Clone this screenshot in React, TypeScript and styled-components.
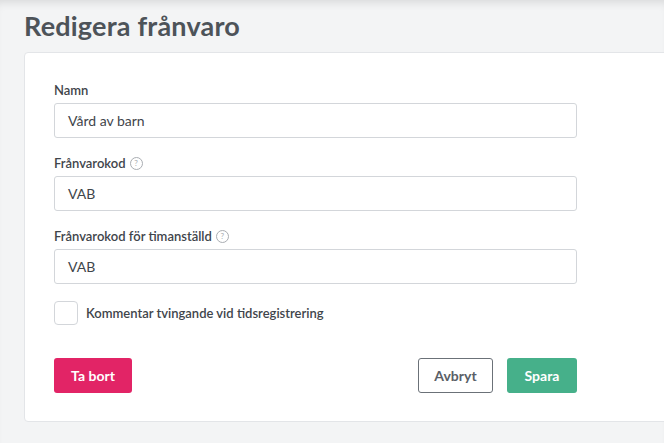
import React from "react";
import styled, { createGlobalStyle } from "styled-components";

const Global = createGlobalStyle`
  html, body { margin: 0; padding: 0; overflow: hidden; }
  body { background: #f3f4f5; font-family: Lato, "Open Sans", sans-serif; color: #4b5258; }
`;

const Page = styled.div`
  height: 443px;
  box-shadow: inset 0 8px 10px -6px rgba(0,0,0,0.12);
  padding: 8px 0 0 24px;
  box-sizing: border-box;
`;

const Title = styled.h1`
  margin: 0 0 9px;
  font-size: 27px;
  font-weight: 700;
  line-height: 35px;
  color: #4d5359;
  letter-spacing: 0.2px;
`;

const Card = styled.div`
  background: #fff;
  border: 1px solid #e3e5e8;
  border-radius: 4px;
  margin-right: -10px;
  padding: 28px 0 28px 29px;
  height: 370px;
  box-sizing: border-box;
`;

const Form = styled.div`
  width: 523px;
  display: flex;
  flex-direction: column;
`;

const Field = styled.div`
  display: flex;
  flex-direction: column;
  margin-bottom: 16px;
`;

const Label = styled.label`
  font-size: 13px;
  font-weight: 600;
  line-height: 18px;
  margin-bottom: 4px;
  color: #3f454b;
  display: flex;
  align-items: center;
  gap: 4px;
`;

const Help = styled.span`
  display: inline-flex;
  align-items: center;
  justify-content: center;
  width: 11px;
  height: 11px;
  border: 1px solid #a9adb2;
  border-radius: 50%;
  font-size: 8px;
  color: #a9adb2;
  font-weight: 400;
`;

const Input = styled.div`
  height: 35px;
  box-sizing: border-box;
  border: 1px solid #d3d6da;
  border-radius: 3px;
  padding: 0 13px;
  display: flex;
  align-items: center;
  font-size: 14px;
  color: #3f454b;
`;

const CheckRow = styled.div`
  display: flex;
  align-items: center;
  gap: 8px;
  margin-top: 1px;
  font-size: 13px;
  font-weight: 600;
  color: #3f454b;
`;

const Box = styled.span`
  width: 24px;
  height: 24px;
  box-sizing: border-box;
  border: 1px solid #d3d6da;
  border-radius: 4px;
`;

const Actions = styled.div`
  margin-top: 33px;
  display: flex;
  align-items: center;
`;

const Right = styled.div`
  margin-left: auto;
  display: flex;
  gap: 14px;
`;

const Button = styled.button<{ $kind: "danger" | "ghost" | "primary"; $w: number }>`
  height: 35px;
  width: ${p => p.$w}px;
  border-radius: 3px;
  font-family: inherit;
  font-size: 14px;
  font-weight: 700;
  cursor: pointer;
  border: 1px solid ${p => p.$kind === "ghost" ? "#6b7178" : "transparent"};
  background: ${p => p.$kind === "danger" ? "#e22466" : p.$kind === "primary" ? "#46b08a" : "#fff"};
  color: ${p => p.$kind === "ghost" ? "#5a6067" : "#fff"};
`;

export default function App() {
  return (
    <>
      <Global />
      <Page>
        <Title>Redigera frånvaro</Title>
        <Card>
          <Form>
            <Field>
              <Label>Namn</Label>
              <Input>Vård av barn</Input>
            </Field>
            <Field>
              <Label>Frånvarokod <Help>?</Help></Label>
              <Input>VAB</Input>
            </Field>
            <Field>
              <Label>Frånvarokod för timanställd <Help>?</Help></Label>
              <Input>VAB</Input>
            </Field>
            <CheckRow>
              <Box />
              Kommentar tvingande vid tidsregistrering
            </CheckRow>
            <Actions>
              <Button $kind="danger" $w={78}>Ta bort</Button>
              <Right>
                <Button $kind="ghost" $w={75}>Avbryt</Button>
                <Button $kind="primary" $w={70}>Spara</Button>
              </Right>
            </Actions>
          </Form>
        </Card>
      </Page>
    </>
  );
}
